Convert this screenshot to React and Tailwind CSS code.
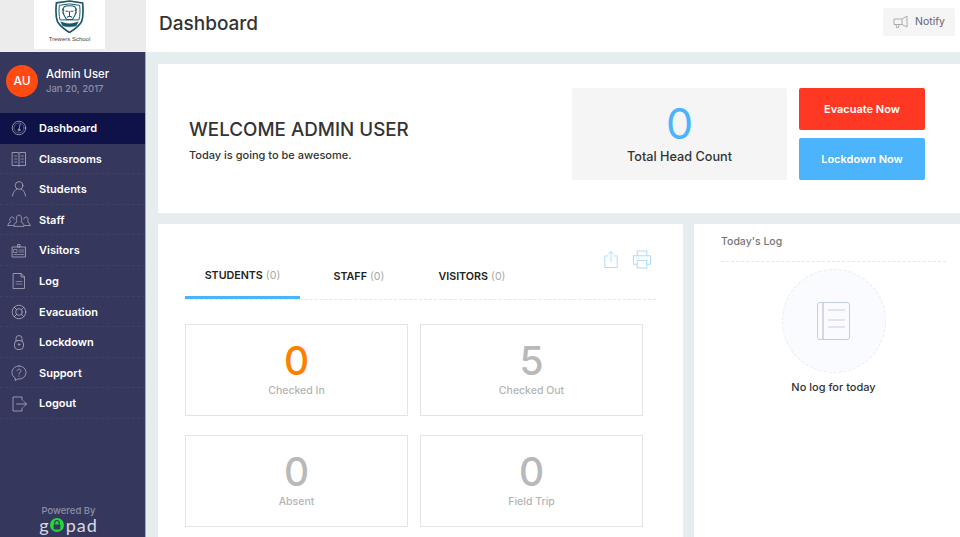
import React from "react";

const ic = { width: 20, height: 20, viewBox: "0 0 20 20", fill: "none", stroke: "#b4b6c6", strokeWidth: 0.75, strokeLinecap: "round", strokeLinejoin: "round" };

const icons = {
  Dashboard: (
    <svg {...ic}><circle cx="10" cy="10" r="6.800" /><circle cx="10" cy="10" r="5" strokeWidth="0.4" /><path d="M10 11.500 11.200 6" /><circle cx="10" cy="12" r="1" /></svg>
  ),
  Classrooms: (
    <svg {...ic}><path d="M3.500 3.500H9l1 .8 1-.8h5.500v13H11l-1 .5-1-.5H3.500zM10 4.300V17" /><path d="M5.500 7h2.500M5.500 10h2.500M5.500 13h2.500M12 7h2.500M12 10h2.500M12 13h2.500" strokeWidth="0.6" /></svg>
  ),
  Students: (
    <svg {...ic}><circle cx="10" cy="6.500" r="3.800" /><path d="M3.500 17c.3-4 3-6.500 4.500-7M16.500 17c-.3-4-3-6.500-4.500-7" /></svg>
  ),
  Staff: (
    <svg width="24" height="14" viewBox="0 0 24 14" fill="none" stroke="#b4b6c6" strokeWidth="0.7" strokeLinecap="round" strokeLinejoin="round"><path d="M1 12.500c0-2.500 1.500-3 2.500-3.500-1-1.500-1-5 1.500-5 1.500 0 2 1 2.200 2M23 12.500c0-2.500-1.500-3-2.500-3.500 1-1.500 1-5-1.500-5-1.500 0-2 1-2.200 2M7 13c0-3 2-3.500 3-4-1-1.500-1.200-7 2-7s3 5.500 2 7c1 .5 3 1 3 4zM1 12.500h5.500M17.500 12.500H23" /></svg>
  ),
  Visitors: (
    <svg {...ic}><rect x="3.500" y="6" width="13" height="10" /><path d="M9 3.500h2V6H9z" /><rect x="5" y="8.500" width="3" height="3" strokeWidth="0.6" /><path d="M10 9h5M10 11h5M5 13.500h10" strokeWidth="0.6" /></svg>
  ),
  Log: (
    <svg {...ic}><path d="M4.500 2.500H12l3.500 3.500v11.500h-11zM12 2.500V6h3.500" /><path d="M7 10.500h6M7 13h6" strokeWidth="0.6" /></svg>
  ),
  Evacuation: (
    <svg {...ic}><circle cx="10" cy="10" r="6.800" /><circle cx="10" cy="10" r="3.300" /><path d="m5.200 5.200 2.400 2.400M14.800 5.200l-2.400 2.400M5.200 14.800l2.400-2.400M14.800 14.800l-2.400-2.400" /></svg>
  ),
  Lockdown: (
    <svg {...ic}><rect x="5.500" y="8.500" width="9" height="9" rx="3.500" /><path d="M7 9V6.500a3 3 0 0 1 6 0V9" /><circle cx="10" cy="12.500" r=".8" /></svg>
  ),
  Support: (
    <svg {...ic}><path d="M10 3c-4 0-7 2.800-7 6.500 0 2.500 1.300 4.400 3.300 5.500l-.3 2.500 3-1.600c.4.100.7.100 1 .100 4 0 7-3 7-6.500S14 3 10 3z" /><path d="M8.200 7.800C8.300 6.800 9 6.200 10 6.200c1.100 0 1.900.7 1.900 1.700 0 1.500-1.900 1.500-1.900 3.200M10 13v.3" /></svg>
  ),
  Logout: (
    <svg {...ic}><path d="M13 6V3H4v14h9v-3M7.500 10h10M14.500 7l3 3-3 3" /></svg>
  ),
};

const nav = ["Dashboard", "Classrooms", "Students", "Staff", "Visitors", "Log", "Evacuation", "Lockdown", "Support", "Logout"];

function Crest() {
  return (
    <svg width="31" height="33" viewBox="0 -1 31 34" fill="none" stroke="#17566b">
      <path d="M2 2 15.500 0l13.500 2c.8 8 .8 14-1 19-2 4.500-7 8-12.500 11.500C10 29 5 25.500 3 21 1.200 16 1.200 10 2 2z" strokeWidth="1.700" />
      <path d="M5 4.500 15.500 3 26 4.500c.5 5.500.5 10.500-.8 15H5.800C4.500 15 4.500 10 5 4.500z" strokeWidth="1" />
      <path d="M10 6c1.500-1.500 9.500-1.500 11 0l1.500 3-1 5-3 5h-6l-3-5-1-5zM11.500 10.500h3M16.500 10.500h3M15.500 10.500v5M13 17c1.500-1.500 3.500-1.500 5 0M8 8l2 2M23 8l-2 2M8 12l2 1M23 12l-2 1" strokeWidth="1.100" />
      <path d="M6.500 21.500c5.500 2.500 12.500 2.500 18 0l-2 4c-4.500 1.500-9.500 1.500-14 0z" fill="#17566b" strokeWidth=".5" />
    </svg>
  );
}

function Stat({ value, label, color }) {
  return (
    <div className="h-[92px] border border-[#e4e4e4] flex flex-col items-center">
      <div className={`text-[39px] leading-[46px] mt-[13px] font-medium ${color}`}>{value}</div>
      <div className="text-[10.500px] leading-[14px] text-[#b4b4b4] font-medium">{label}</div>
    </div>
  );
}

function Tab({ name, width, active }) {
  return (
    <div className={`h-[50px] flex items-center justify-center pt-[7px] ${width} ${active ? "border-b-[3px] border-[#4cb3fd]" : ""}`}>
      <span className="text-[10.700px] font-semibold text-[#222]">{name}</span>
      <span className="text-[10.700px] text-[#aaa] ml-[3px]">(0)</span>
    </div>
  );
}

export default function App() {
  return (
    <div className="w-[960px] h-[537px] overflow-hidden flex bg-[#e6edef] font-['Inter','Liberation_Sans',sans-serif]">
      <aside className="w-[146px] shrink-0 h-full flex flex-col">
        <div className="h-[52px] shrink-0 bg-[#ececec] flex justify-center">
          <div className="w-[71px] h-[49px] ml-[-7px] bg-white flex flex-col items-center">
            <Crest />
            <span className="text-[6px] leading-[8px] text-[#444] mt-[2px] font-['Liberation_Sans',sans-serif]">Trewers School</span>
          </div>
        </div>
        <div className="flex-1 min-h-0 flex flex-col bg-[#35375c] border-r border-[#a7a9b8]">
          <div className="h-[61px] shrink-0 flex items-center pl-[6px] pb-[3px]">
            <div className="w-[32px] h-[32px] rounded-full bg-[#ff4a12] text-white text-[12px] font-medium flex items-center justify-center">AU</div>
            <div className="ml-[8px]">
              <div className="text-[11.300px] leading-[15px] font-medium text-white">Admin User</div>
              <div className="text-[9.500px] leading-[13px] font-medium text-[#8d8fa6]">Jan 20, 2017</div>
            </div>
          </div>
          <nav className="flex flex-col">
            {nav.map((n, i) => (
              <div key={n} className={`h-[30.600px] pt-[1px] flex items-center border-b border-dashed ${i === 0 ? "bg-[#0e1248] border-transparent" : "border-[#3f4167]"}`}>
                <div className="w-[37px] mr-[2px] flex justify-center shrink-0">{icons[n]}</div>
                <span className="text-[11px] font-semibold text-white">{n}</span>
              </div>
            ))}
          </nav>
          <div className="mt-auto pb-[4px] pr-[8px] flex flex-col items-center">
            <span className="text-[9.500px] leading-[12px] text-[#8d8fa6] font-medium">Powered By</span>
            <div className="flex items-center h-[16px] text-[#d8d9e0] text-[18px] leading-[16px] tracking-[1px] font-['Lato',sans-serif]">
              <span>g</span>
              <span className="w-[14px] h-[14px] rounded-full bg-[#22d83a] flex items-center justify-center">
                <svg width="8" height="10" viewBox="0 0 7 9">
                  <path d="M1.500 4V2.500a2 2 0 0 1 4 0V4" fill="none" stroke="#35375c" strokeWidth="1" />
                  <rect x=".5" y="4" width="6" height="4.500" rx=".8" fill="#35375c" />
                </svg>
              </span>
              <span className="ml-[2px]">pad</span>
            </div>
          </div>
        </div>
      </aside>

      <main className="flex-1 min-w-0 flex flex-col">
        <header className="h-[52px] shrink-0 bg-white flex items-center justify-between pl-[13px] pr-[5px] pb-[3px]">
          <h1 className="text-[19px] font-medium text-[#333]">Dashboard</h1>
          <button className="w-[72px] h-[28px] mt-[-5px] bg-[#f5f5f5] rounded-[2px] flex items-center justify-center gap-[6px] text-[10.500px] text-[#62647a]">
            <svg width="16" height="14" viewBox="0 0 16 14" fill="none" stroke="#a5a5a5" strokeWidth=".9" strokeLinejoin="round">
              <path d="M1 4h8l5-3v11L9 9.500H1zM3 9.500l.5 3h2l.5-3M9 4v5.500" />
            </svg>
            Notify
          </button>
        </header>

        <section className="ml-[12px] mt-[12px] h-[149px] shrink-0 bg-white flex pt-[24px]">
          <div className="w-[414px] pl-[31px] pt-[31px]">
            <h2 className="text-[18.800px] leading-[22px] font-medium text-[#333]">WELCOME ADMIN USER</h2>
            <p className="text-[11px] leading-[14px] mt-[7px] font-medium text-[#333]">Today is going to be awesome.</p>
          </div>
          <div className="w-[215px] h-[92px] bg-[#f5f5f5] rounded-[2px] flex flex-col items-center">
            <div className="text-[43px] leading-[50px] mt-[10px] text-[#4cb3fd]">0</div>
            <div className="text-[12.700px] leading-[16px] mt-[1px] font-medium text-[#333]">Total Head Count</div>
          </div>
          <div className="w-[126px] ml-[12px] flex flex-col gap-[8px]">
            <button className="h-[42px] rounded-[2px] bg-[#ff3823] text-white text-[11px] font-semibold">Evacuate Now</button>
            <button className="h-[42px] rounded-[2px] bg-[#4cb3fd] text-white text-[11px] font-semibold">Lockdown Now</button>
          </div>
        </section>

        <div className="ml-[12px] mt-[11px] flex-1 min-h-0 flex gap-[11px]">
          <section className="w-[525px] bg-white pl-[27px] pt-[26px] overflow-hidden">
            <div className="w-[471px] h-[50px] flex items-end border-b border-dashed border-[#e6e6e6] relative">
              <Tab name="STUDENTS" width="w-[115px]" active />
              <Tab name="STAFF" width="w-[88px] ml-[15px]" />
              <Tab name="VISITORS" width="w-[88px] ml-[25px]" />
              <div className="absolute right-[4px] top-[0px] flex gap-[13px]">
                <svg width="16" height="19" viewBox="0 0 18 20" fill="none" stroke="#aedcfd" strokeWidth="1.100">
                  <path d="M6 6H2v13h14V6h-4M9 13V1M6 4l3-3 3 3" />
                </svg>
                <svg width="20" height="19" viewBox="0 0 20 20" fill="none" stroke="#aedcfd" strokeWidth="1.100">
                  <path d="M5 6V1h10v5M5 15H1V6h18v9h-4M5 11h10v8H5zM3.500 8.500h1M6 8.500h1" />
                </svg>
              </div>
            </div>
            <div className="w-[458px] mt-[24px] grid grid-cols-2 gap-x-[12px] gap-y-[19px]">
              <Stat value="0" label="Checked In" color="text-[#ff8000]" />
              <Stat value="5" label="Checked Out" color="text-[#b9b9b9]" />
              <Stat value="0" label="Absent" color="text-[#b9b9b9]" />
              <Stat value="0" label="Field Trip" color="text-[#b9b9b9]" />
            </div>
          </section>

          <section className="flex-1 min-w-0 bg-white pl-[27px] pr-[14px]">
            <div className="h-[38px] pt-[11px] border-b border-dashed border-[#e4e6ea] text-[10.500px] leading-[14px] font-medium text-[#777]">Today's Log</div>
            <div className="flex flex-col items-center">
              <div className="mt-[7px] w-[104px] h-[104px] rounded-full bg-[#fafbfe] border border-dashed border-[#e4ecfa] flex items-center justify-center">
                <svg width="34" height="38" viewBox="0 0 34 38" fill="none" stroke="#c4cede" strokeWidth="1">
                  <rect x=".5" y=".5" width="32" height="37" rx="2.500" />
                  <path d="M6 .5v37" strokeWidth="1.500" />
                  <path d="M11 9h17M11 19h17M11 26h17" transform="translate(0 -1)" />
                </svg>
              </div>
              <div className="mt-[7px] text-[11px] leading-[14px] font-medium text-[#333]">No log for today</div>
            </div>
          </section>
        </div>
      </main>
    </div>
  );
}
